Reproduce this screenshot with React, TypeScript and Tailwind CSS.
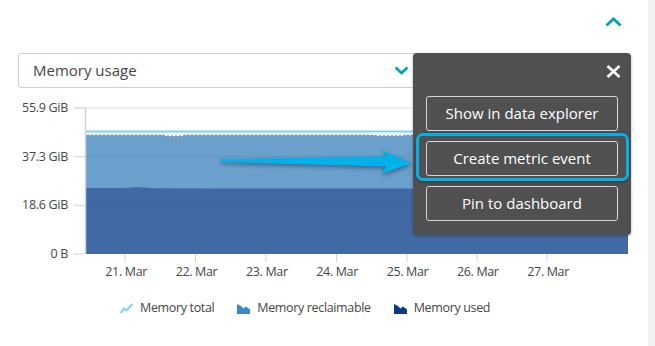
import React from "react";

const TEXT = "text-[#454646]";

const Y_LABELS = ["55.9 GiB", "37.3 GiB", "18.6 GiB", "0 B"];
const X_LABELS = ["21. Mar", "22. Mar", "23. Mar", "24. Mar", "25. Mar", "26. Mar", "27. Mar"];
const X_TICKS = [51, 121.5, 192, 262.5, 333, 403, 473];

// chart plot spans x 12..554, y 8..154 inside the svg
function buildReclaimable() {
    let d = "M12,154 L12,35";
    for (let x = 12, i = 0; x <= 554; x += 2, i++) {
        let y = i % 2 ? 34.2 : 35.6;
        if (x > 90 && x < 110) y += 0.8;
        if (x > 300 && x < 330) y += 0.6;
        d += ` L${x},${y}`;
    }
    d += " L554,154 Z";
    return d;
}

function buildUsed() {
    const pts: [number, number][] = [
        [12, 88], [50, 88], [58, 87.6], [64, 87], [70, 87.4], [80, 88.2],
        [150, 88.6], [200, 88.6], [240, 88.4], [260, 88.6], [554, 88.6],
    ];
    return "M12,154 " + pts.map(([x, y]) => `L${x},${y}`).join(" ") + " L554,154 Z";
}

function ChevronUp() {
    return (
        <svg width="17" height="10" viewBox="0 0 17 10">
            <path d="M1.5,8.5 L8.5,1.8 L15.5,8.5" fill="none" stroke="#00a1b2" strokeWidth="2.8" />
        </svg>
    );
}

function ChevronDown() {
    return (
        <svg width="15" height="9" viewBox="0 0 15 9">
            <path d="M1.5,1.5 L7.5,7 L13.5,1.5" fill="none" stroke="#00a1b2" strokeWidth="2.6" />
        </svg>
    );
}

function Chart() {
    return (
        <div className="flex">
            <div className={`flex h-[162px] w-[74px] flex-col justify-between pr-[6px] text-right text-[12.5px] leading-[16px] tracking-[-0.3px] ${TEXT}`}>
                {Y_LABELS.map((l) => (
                    <span key={l}>{l}</span>
                ))}
            </div>
            <svg width="556" height="162" viewBox="0 0 556 162">
                <line x1="0" y1="8" x2="554" y2="8" stroke="#dde2ec" strokeWidth="1" />
                <path d={buildReclaimable()} fill="#6aa0cb" />
                <path d={buildUsed()} fill="#4169a4" />
                <line x1="12" y1="31.6" x2="554" y2="31.6" stroke="#7dd3f4" strokeWidth="2" />
                <line x1="12" y1="56.7" x2="554" y2="56.7" stroke="#000" strokeOpacity="0.07" strokeWidth="1" />
                <line x1="12" y1="105.3" x2="554" y2="105.3" stroke="#000" strokeOpacity="0.07" strokeWidth="1" />
                {[8, 56.7, 105.3, 154].map((y) => (
                    <line key={y} x1="0" y1={y} x2="11" y2={y} stroke="#ccd3e3" strokeWidth="1" />
                ))}
                <line x1="11.5" y1="8" x2="11.5" y2="154" stroke="#ccd3e3" strokeWidth="1.5" />
                {X_TICKS.map((x) => (
                    <line key={x} x1={x} y1="154" x2={x} y2="162" stroke="#ccd3e3" strokeWidth="1" />
                ))}
            </svg>
        </div>
    );
}

function LegendItem({ icon, label }: { icon: React.ReactNode; label: string }) {
    return (
        <div className="flex items-center gap-[7px]">
            {icon}
            <span>{label}</span>
        </div>
    );
}

function Popup() {
    const btn = "flex h-[35px] w-full items-center justify-center rounded-[3px] border border-[#d6d6d6] text-[15px] text-white";
    return (
        <div className="absolute left-[413px] top-[53px] flex h-[182px] w-[218px] flex-col rounded-[4px] bg-[#505050] px-[13px] pb-[13px] shadow-[0_1px_3px_rgba(0,0,0,0.3)]">
            <div className="flex h-[43px] justify-end pt-[12px]">
                <svg width="15" height="13" viewBox="0 0 15 13" className="mr-[-3px]">
                    <path d="M1.5,1 L13.5,12 M13.5,1 L1.5,12" stroke="#fff" strokeWidth="2.6" />
                </svg>
            </div>
            <div className="flex flex-col gap-[10px]">
                <button className={btn}>Show in data explorer</button>
                <button className={btn}>Create metric event</button>
                <button className={btn}>Pin to dashboard</button>
            </div>
        </div>
    );
}

export default function App() {
    return (
        <div className="relative flex h-[346px] w-[655px] overflow-hidden bg-white font-['Open_Sans',sans-serif]">
            <div className="flex flex-1 flex-col">
                {/* Header */}
                <div className="flex h-[53px] justify-end pr-[26px] pt-[17px]">
                    <ChevronUp />
                </div>

                {/* Metric select */}
                <div className={`ml-[18px] flex h-[35px] w-[404px] items-center justify-between rounded-[3px] border border-[#cfcfcf] pl-[14px] pr-[12px] text-[15px] ${TEXT}`}>
                    <span>Memory usage</span>
                    <ChevronDown />
                </div>

                {/* Chart */}
                <div className="mt-[12px]">
                    <Chart />
                </div>
                <div className={`ml-[91px] mt-[2px] flex text-[12.5px] leading-[16px] tracking-[-0.35px] ${TEXT}`}>
                    {X_LABELS.map((l) => (
                        <span key={l} className="w-[70.33px] text-center">
                            {l}
                        </span>
                    ))}
                </div>

                {/* Legend */}
                <div className={`ml-[120px] mt-[19px] flex items-center gap-[23px] text-[12.5px] tracking-[-0.35px] ${TEXT}`}>
                    <LegendItem
                        label="Memory total"
                        icon={
                            <svg width="13" height="11" viewBox="0 0 13 11">
                                <path d="M0.5,10 L4,5.5 L6.5,7.5 L12.5,1" fill="none" stroke="#7dd3f4" strokeWidth="2" />
                            </svg>
                        }
                    />
                    <LegendItem
                        label="Memory reclaimable"
                        icon={
                            <svg width="13" height="11" viewBox="0 0 13 11">
                                <path d="M0,11 L0,1 L4,3 L6.5,5.5 L9,3.5 L13,6.5 L13,11 Z" fill="#3d87c2" />
                            </svg>
                        }
                    />
                    <LegendItem
                        label="Memory used"
                        icon={
                            <svg width="13" height="11" viewBox="0 0 13 11">
                                <path d="M0,11 L0,1 L4,3 L6.5,5.5 L9,3.5 L13,6.5 L13,11 Z" fill="#0e3a7d" />
                            </svg>
                        }
                    />
                </div>
            </div>
            <div className="w-[7px] bg-[#f2f2f2]" />

            <Popup />

            {/* Annotation highlight */}
            <div className="absolute left-[416px] top-[133px] h-[48px] w-[213px] rounded-[7px] border-[3px] border-[#00b2e7] shadow-[0_1px_3px_rgba(0,0,0,0.35)]" />

            {/* Annotation arrow */}
            <svg className="pointer-events-none absolute left-0 top-0" width="655" height="346" viewBox="0 0 655 346">
                <polygon
                    points="221,159.5 386,156.5 382,150.5 412,163 382,174 386,166.5 221,162"
                    fill="#00b1ea"
                    style={{ filter: "drop-shadow(0px 2px 2px rgba(0,0,40,0.4))" }}
                />
            </svg>
        </div>
    );
}
